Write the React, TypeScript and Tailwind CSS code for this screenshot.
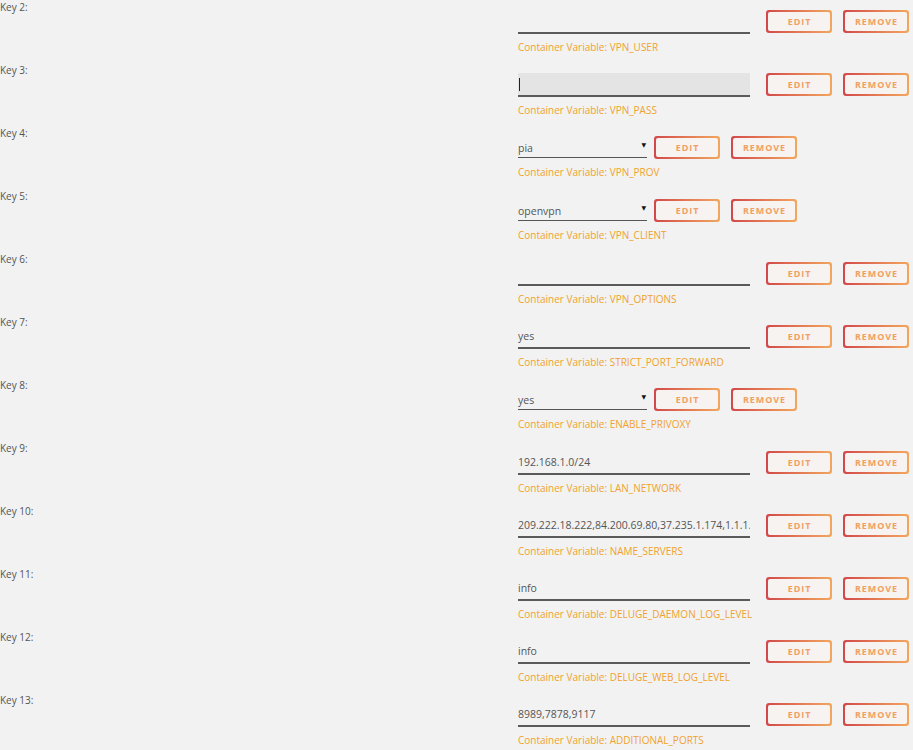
import React from 'react';

type VarRow = {
  key: number;
  value: string;
  name: string;
  kind: 'text' | 'select' | 'focused';
};

const rows: VarRow[] = [
  { key: 2, value: '', name: 'VPN_USER', kind: 'text' },
  { key: 3, value: '', name: 'VPN_PASS', kind: 'focused' },
  { key: 4, value: 'pia', name: 'VPN_PROV', kind: 'select' },
  { key: 5, value: 'openvpn', name: 'VPN_CLIENT', kind: 'select' },
  { key: 6, value: '', name: 'VPN_OPTIONS', kind: 'text' },
  { key: 7, value: 'yes', name: 'STRICT_PORT_FORWARD', kind: 'text' },
  { key: 8, value: 'yes', name: 'ENABLE_PRIVOXY', kind: 'select' },
  { key: 9, value: '192.168.1.0/24', name: 'LAN_NETWORK', kind: 'text' },
  { key: 10, value: '209.222.18.222,84.200.69.80,37.235.1.174,1.1.1.1', name: 'NAME_SERVERS', kind: 'text' },
  { key: 11, value: 'info', name: 'DELUGE_DAEMON_LOG_LEVEL', kind: 'text' },
  { key: 12, value: 'info', name: 'DELUGE_WEB_LOG_LEVEL', kind: 'text' },
  { key: 13, value: '8989,7878,9117', name: 'ADDITIONAL_PORTS', kind: 'text' },
];

const GradientButton: React.FC<{ label: string }> = ({ label }) => (
  <div className="w-[66px] h-[23px] rounded-[3px] p-[2px] bg-gradient-to-r from-[#d2474a] to-[#f2a65e]">
    <button className="w-full h-full rounded-[2px] bg-[#f6f3f1] flex items-center justify-center text-[9px] font-bold tracking-[0.9px] text-[#f2a062] leading-none pl-[1px]">
      {label}
    </button>
  </div>
);

const ValueField: React.FC<{ row: VarRow }> = ({ row }) => {
  if (row.kind === 'select') {
    return (
      <div className="relative w-[129px] h-[22px] border-b-[1.5px] border-[#555]">
        <select
          defaultValue={row.value}
          className="appearance-none block w-full h-[19px] mt-[3px] bg-transparent outline-none text-[10.5px] leading-[19px] text-[#555]"
        >
          <option value={row.value}>{row.value}</option>
        </select>
        <span className="absolute right-[1px] top-[5px] text-[6px] text-[#111] pointer-events-none">▼</span>
      </div>
    );
  }

  return (
    <div
      className={`relative w-[232px] h-[24px] border-b-2 border-[#5a5a5a] ${
        row.kind === 'focused' ? 'bg-[#e4e4e4]' : ''
      }`}
    >
      <input
        type="text"
        readOnly
        defaultValue={row.value}
        className="block w-full h-[22px] bg-transparent outline-none text-[10.5px] leading-[22px] text-[#555]"
      />
      {row.kind === 'focused' && (
        <span className="absolute left-[1px] top-[5px] w-px h-[13px] bg-[#222]" />
      )}
    </div>
  );
};

export default function App() {
  return (
    <div
      className="min-h-screen bg-[#f2f2f2] overflow-hidden"
      style={{ fontFamily: '"Open Sans", "DejaVu Sans", sans-serif' }}
    >
      {rows.map((row) => (
        <div key={row.key} className="flex h-[63px]">
          <div className="w-[518px] shrink-0 text-[10px] leading-[14px] text-[#555]">Key {row.key}:</div>
          <div className="flex flex-col">
            <div className={`flex items-start mt-[10px] ${row.kind === 'select' ? 'gap-[7px]' : 'gap-[16px]'}`}>
              <ValueField row={row} />
              <div className="flex gap-[11px]">
                <GradientButton label="EDIT" />
                <GradientButton label="REMOVE" />
              </div>
            </div>
            <div className="mt-[6px] text-[10px] leading-[14px] text-[#f0a22d] whitespace-nowrap">
              Container Variable: {row.name}
            </div>
          </div>
        </div>
      ))}
    </div>
  );
}
